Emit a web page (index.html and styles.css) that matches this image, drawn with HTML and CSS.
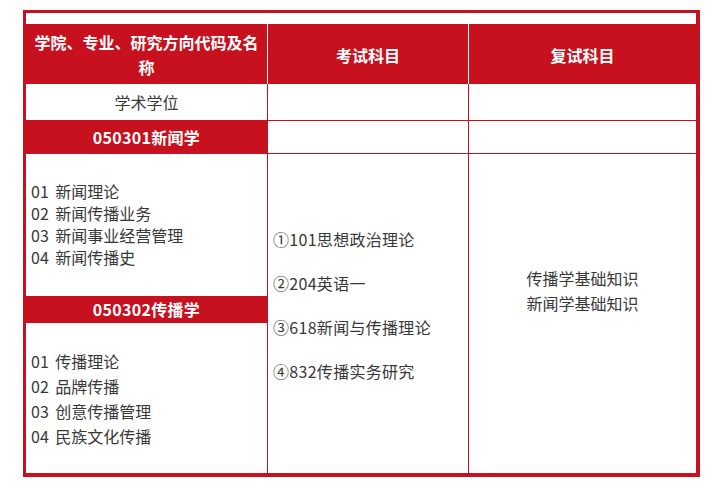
FILE: index.html
```html
<!DOCTYPE html>
<html lang="zh-CN">
<head>
<meta charset="utf-8">
<title>招生目录</title>
<link rel="stylesheet" href="styles.css">
</head>
<body>
<div class="frame">
  <div class="cols">
    <div class="col col-1">
      <div class="head">学院、专业、研究方向代码及名称</div>
      <div class="cell-type">学术学位</div>
      <div class="band band-1">050301新闻学</div>
      <div class="list list-1">
        <div>01 新闻理论</div>
        <div>02 新闻传播业务</div>
        <div>03 新闻事业经营管理</div>
        <div>04 新闻传播史</div>
      </div>
      <div class="band band-2">050302传播学</div>
      <div class="list list-2">
        <div>01 传播理论</div>
        <div>02 品牌传播</div>
        <div>03 创意传播管理</div>
        <div>04 民族文化传播</div>
      </div>
    </div>
    <div class="col col-2">
      <div class="head">考试科目</div>
      <div class="empty empty-a"></div>
      <div class="empty empty-b"></div>
      <div class="big exams">
        <p>①101思想政治理论</p>
        <p>②204英语一</p>
        <p>③618新闻与传播理论</p>
        <p>④832传播实务研究</p>
      </div>
    </div>
    <div class="col col-3">
      <div class="head">复试科目</div>
      <div class="empty empty-a"></div>
      <div class="empty empty-b"></div>
      <div class="big retest">
        <div>传播学基础知识</div>
        <div>新闻学基础知识</div>
      </div>
    </div>
  </div>
</div>
</body>
</html>
```

FILE: styles.css
```css
html, body {
  margin: 0;
  padding: 0;
  background: #ffffff;
}

body {
  font-family: "Noto Sans CJK SC", "Microsoft YaHei", "Noto Sans", sans-serif;
  font-size: 16px;
  color: #383838;
}

.frame {
  margin: 10px 0 0 23px;
  width: 670px;
  border-style: solid;
  border-color: #c8111e;
  border-width: 3px 4px 4px 3px;
  padding-top: 11px;
  background: #ffffff;
}

.cols {
  display: flex;
  height: 449px;
}

.col {
  display: flex;
  flex-direction: column;
}

.col-1 {
  width: 241px;
}

.col-2 {
  width: 200px;
  border-left: 1px solid #c8111e;
}

.col-3 {
  width: 227px;
  border-left: 1px solid #c8111e;
}

.head {
  height: 60px;
  box-sizing: border-box;
  background: #c8111e;
  color: #ffffff;
  font-weight: bold;
  line-height: 25px;
  padding: 6px 5px 4px;
  text-align: center;
  display: flex;
  align-items: center;
  justify-content: center;
}

.col-2 .head,
.col-3 .head {
  box-shadow: -1px 0 0 #ffffff;
}

.cell-type {
  height: 36px;
  line-height: 36px;
  text-align: center;
}

.band {
  background: #c8111e;
  color: #ffffff;
  font-weight: bold;
  text-align: center;
  letter-spacing: 0.3px;
}

.band-1 {
  height: 34px;
  line-height: 34px;
}

.band-2 {
  height: 27px;
  line-height: 27px;
}

.list {
  padding-left: 5px;
  box-sizing: border-box;
  word-spacing: 3px;
}

.list-1 {
  height: 142px;
  padding-top: 26px;
  line-height: 22px;
}

.list-2 {
  flex: 1;
  padding-top: 26px;
  line-height: 25px;
}

.empty {
  border-bottom: 1px solid #c8111e;
}

.empty-a {
  height: 36px;
}

.empty-b {
  height: 32px;
}

.big {
  flex: 1;
  box-sizing: border-box;
}

.exams {
  padding: 74px 5px 0;
  letter-spacing: 0.3px;
}

.exams p {
  margin: 0 0 22px;
  line-height: 22px;
}

.retest {
  padding-top: 112px;
  line-height: 25px;
  text-align: center;
}
```
